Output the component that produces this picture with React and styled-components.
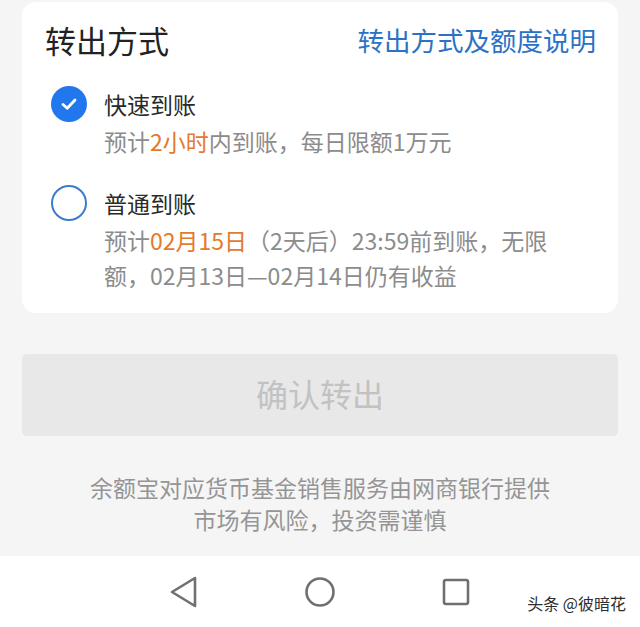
import styled, { createGlobalStyle } from 'styled-components'

const GlobalStyle = createGlobalStyle`
  html, body {
    margin: 0;
    padding: 0;
    background: #f5f5f5;
    font-family: "Noto Sans CJK SC", "Noto Sans", sans-serif;
  }
`

const Page = styled.div`
  position: relative;
  display: flex;
  flex-direction: column;
  width: 640px;
  height: 627px;
  overflow: hidden;
  background: #f5f5f5;
`

const Card = styled.div`
  margin: 2px 22px 0;
  padding: 0 22px 20px 23px;
  background: #fff;
  border-radius: 14px;
`

const Header = styled.div`
  display: flex;
  align-items: center;
  justify-content: space-between;
  height: 76px;
  padding-bottom: 2px;
  box-sizing: border-box;
`

const Title = styled.div`
  font-size: 31px;
  font-weight: 400;
  color: #222;
`

const Link = styled.div`
  font-size: 26.5px;
  color: #2b72c6;
`

const Options = styled.div`
  display: flex;
  flex-direction: column;
  gap: 26px;
  padding: 8px 0 0 6px;
`

const Option = styled.div`
  display: flex;
  align-items: flex-start;
  gap: 17px;
`

const Radio = styled.div`
  flex-shrink: 0;
  display: flex;
  align-items: center;
  justify-content: center;
  width: 36px;
  height: 36px;
  box-sizing: border-box;
  border-radius: 50%;
  background: ${p => (p.checked ? '#2178ee' : '#fff')};
  border: ${p => (p.checked ? 'none' : '2px solid #3d7bcf')};
`

const OptionBody = styled.div`
  display: flex;
  flex-direction: column;
  gap: 2px;
`

const Label = styled.div`
  font-size: 23px;
  line-height: 36px;
  color: #2a2a2a;
`

const Desc = styled.div`
  width: 455px;
  font-size: 23px;
  line-height: 35px;
  color: #8c8c8c;
`

const Hl = styled.span`
  color: #e47a2c;
`

const ConfirmButton = styled.div`
  display: flex;
  align-items: center;
  justify-content: center;
  margin: 41px 22px 0;
  height: 82px;
  padding-bottom: 5px;
  box-sizing: border-box;
  border-radius: 5px;
  background: #e8e8e8;
  color: #c2c2c2;
  font-size: 32px;
`

const Notice = styled.div`
  margin-top: 35px;
  text-align: center;
  font-size: 23px;
  line-height: 32px;
  color: #959595;
`

const NavBar = styled.div`
  margin-top: auto;
  display: grid;
  grid-template-columns: repeat(3, 136px);
  justify-content: center;
  align-items: center;
  justify-items: center;
  height: 71px;
  background: #fff;
`

const Watermark = styled.div`
  position: absolute;
  right: 14px;
  bottom: 12px;
  font-size: 16px;
  color: #2e2e2e;
  text-shadow: 0 0 2px #fff, 0 0 2px #fff;
`

const Check = () => (
  <svg width="20" height="20" viewBox="0 0 20 20">
    <path d="M4 10.5 L8.2 14.2 L16 6" fill="none" stroke="#fff" strokeWidth="2.8" strokeLinecap="round" strokeLinejoin="round" />
  </svg>
)

const BackIcon = () => (
  <svg width="28" height="32" viewBox="0 0 28 32">
    <path d="M25 2 L2 16 L25 30 Z" fill="none" stroke="#707070" strokeWidth="2.6" strokeLinejoin="round" />
  </svg>
)

const HomeIcon = () => (
  <svg width="32" height="32" viewBox="0 0 32 32">
    <circle cx="16" cy="16" r="13.5" fill="none" stroke="#707070" strokeWidth="2.6" />
  </svg>
)

const RecentIcon = () => (
  <svg width="28" height="28" viewBox="0 0 28 28">
    <rect x="2" y="2" width="24" height="24" rx="2" fill="none" stroke="#707070" strokeWidth="2.6" />
  </svg>
)

const App = () => {
  return (
    <Page>
      <GlobalStyle />
      <Card>
        <Header>
          <Title>转出方式</Title>
          <Link>转出方式及额度说明</Link>
        </Header>
        <Options>
          <Option>
            <Radio checked><Check /></Radio>
            <OptionBody>
              <Label>快速到账</Label>
              <Desc>预计<Hl>2小时</Hl>内到账，每日限额1万元</Desc>
            </OptionBody>
          </Option>
          <Option>
            <Radio />
            <OptionBody>
              <Label>普通到账</Label>
              <Desc>
                预计<Hl>02月15日</Hl>（2天后）23:59前到账，无限额，02月13日—02月14日仍有收益
              </Desc>
            </OptionBody>
          </Option>
        </Options>
      </Card>

      <ConfirmButton>确认转出</ConfirmButton>

      <Notice>
        余额宝对应货币基金销售服务由网商银行提供
        <br />
        市场有风险，投资需谨慎
      </Notice>

      <NavBar>
        <BackIcon />
        <HomeIcon />
        <RecentIcon />
      </NavBar>

      <Watermark>头条 @彼暗花</Watermark>
    </Page>
  )
}

export default App
